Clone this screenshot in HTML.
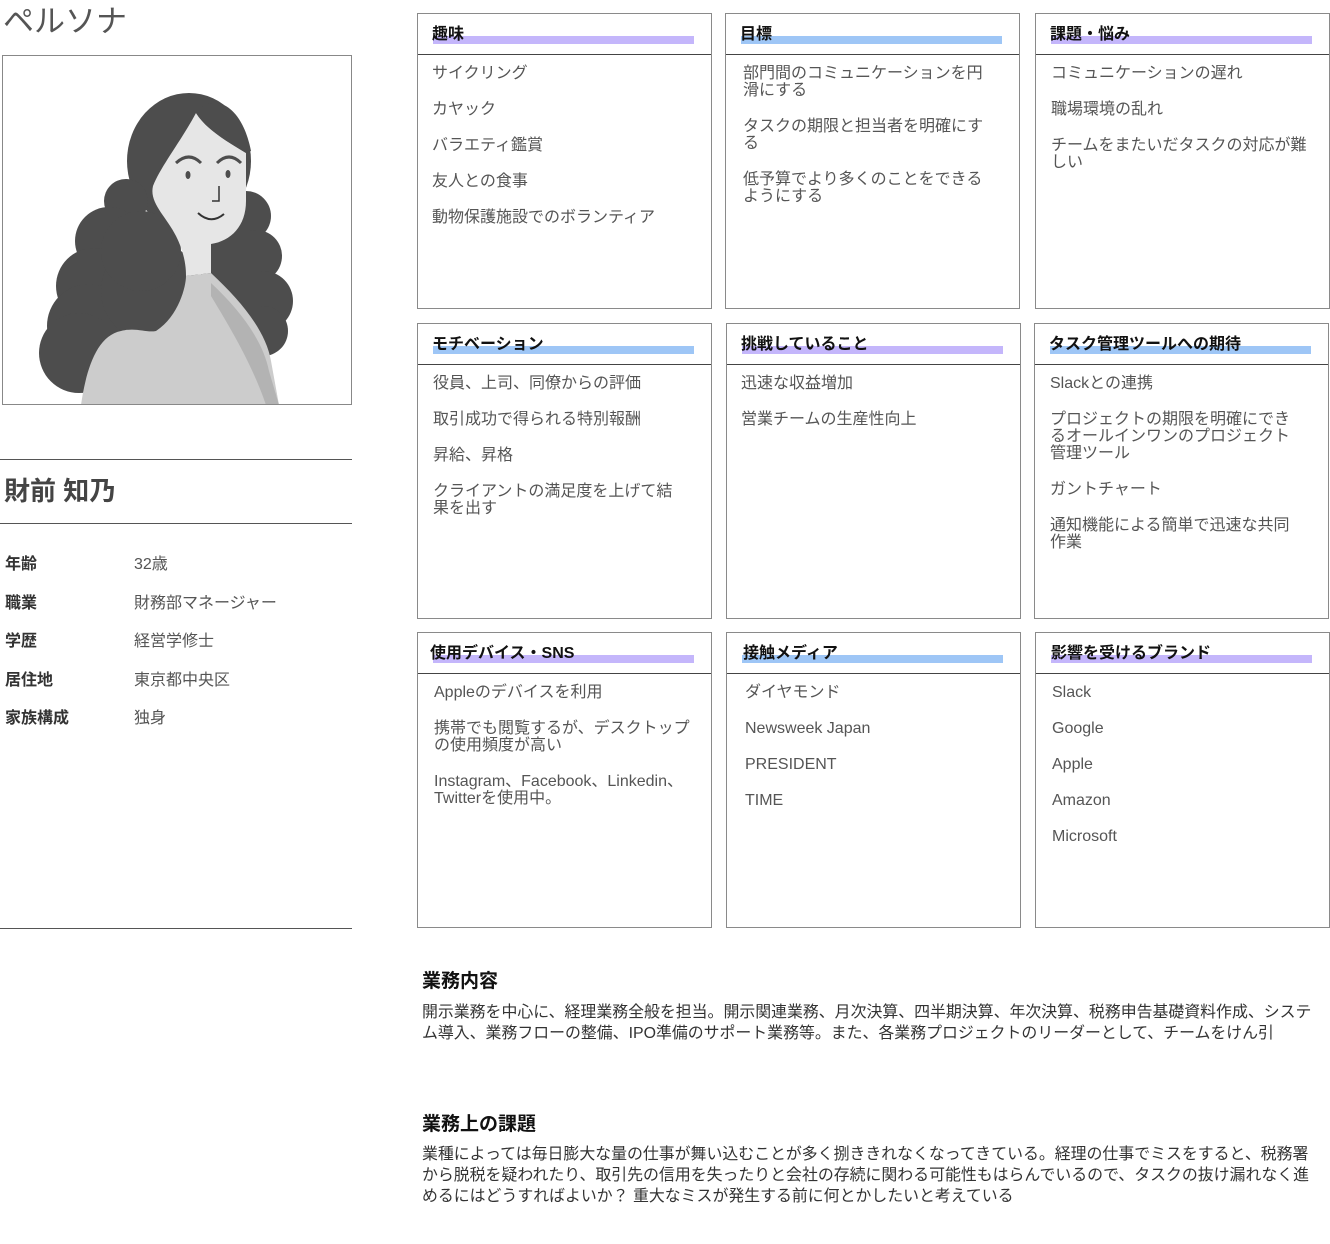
<!DOCTYPE html>
<html><head><meta charset="utf-8"><style>
*{margin:0;padding:0;box-sizing:border-box}
body{width:1330px;height:1244px;background:#fff;font-family:"Liberation Sans","Noto Sans CJK JP",sans-serif;color:#555;position:relative;overflow:hidden}
.a{position:absolute;white-space:nowrap}
.box{position:absolute;border:1px solid #8a8a8a;width:295px;height:296px}
.box .hd{position:absolute;left:0;top:0;right:0;height:41px;border-bottom:1px solid #444}
.box .bar{position:absolute;left:15px;top:22px;width:261px;height:8px}
.box .t{position:absolute;left:14px;top:6px;font-weight:bold;font-size:16px;color:#111}
.box ul{position:absolute;left:14px;top:51px;right:14px;list-style:none;font-size:16px;line-height:17px;color:#555}
.box li{margin-bottom:19px}
.p{background:#c4b6fb}.b{background:#9ec6f6}
.lbl{font-weight:bold;font-size:16px;color:#333;left:5px}
.val{font-size:16px;color:#555;left:134px}
</style></head><body>
<div class="a" style="left:3px;top:-4px;font-size:31px;color:#555">ペルソナ</div>
<div class="a" style="left:2px;top:55px;width:350px;height:350px;border:1px solid #888;overflow:hidden">
<svg width="350" height="350" viewBox="2 55 350 350">
<g fill="#4d4d4d">
<ellipse cx="188" cy="160" rx="62" ry="68"/>
<circle cx="125" cy="200" r="22"/><circle cx="108" cy="240" r="34"/><circle cx="93" cy="285" r="38"/><circle cx="88" cy="325" r="42"/><circle cx="78" cy="352" r="40"/>
<circle cx="150" cy="290" r="50"/><circle cx="140" cy="250" r="40"/>
<circle cx="245" cy="215" r="25"/><circle cx="255" cy="255" r="26"/><circle cx="262" cy="300" r="30"/><circle cx="262" cy="330" r="25"/>
<rect x="200" y="230" width="60" height="110"/>
</g>
<path d="M195,112 C180,140 160,165 152,185 C148,202 165,215 175,235 C185,255 185,270 185,275 L210,272 L210,243 C230,240 245,225 245,200 L245,152 C225,140 205,128 195,112 Z" fill="#e6e6e6"/>
<path d="M195,112 C210,92 240,100 250,150 L245,152 C225,140 205,128 195,112 Z" fill="#4d4d4d"/>
<path d="M80,404 C85,370 95,335 120,330 C135,326 145,332 155,330 C178,315 185,285 185,275 L210,272 C240,300 265,330 270,360 L278,404 Z" fill="#cccccc"/>
<path d="M210,282 C240,310 262,340 268,370 L278,404 L265,404 C250,360 225,320 210,295 Z" fill="#b3b3b3"/>
<ellipse cx="187" cy="174" rx="2.5" ry="4" fill="#4d4d4d"/><ellipse cx="227" cy="173" rx="2.5" ry="4" fill="#4d4d4d"/>
<path d="M175,162 Q188,150 200,162" stroke="#4d4d4d" stroke-width="3" fill="none"/>
<path d="M216,162 Q228,150 240,162" stroke="#4d4d4d" stroke-width="3" fill="none"/>
<path d="M218,185 L218,200 L211,200" stroke="#333" stroke-width="1.5" fill="none"/>
<path d="M197,212 Q210,224 223,213" stroke="#333" stroke-width="2" fill="none"/>
</svg></div>
<div class="a" style="left:0;top:459px;width:352px;border-top:1px solid #555"></div>
<div class="a" style="left:4px;top:471px;font-size:26px;font-weight:bold;color:#444">財前 知乃</div>
<div class="a" style="left:0;top:523px;width:352px;border-top:1px solid #555"></div>
<div class="a lbl" style="top:550px">年齢</div><div class="a val" style="top:550px">32歳</div>
<div class="a lbl" style="top:589px">職業</div><div class="a val" style="top:589px">財務部マネージャー</div>
<div class="a lbl" style="top:627px">学歴</div><div class="a val" style="top:627px">経営学修士</div>
<div class="a lbl" style="top:666px">居住地</div><div class="a val" style="top:666px">東京都中央区</div>
<div class="a lbl" style="top:704px">家族構成</div><div class="a val" style="top:704px">独身</div>
<div class="a" style="left:0;top:928px;width:352px;border-top:1px solid #555"></div>

<div class="box" style="left:417px;top:13px"><div class="hd"><div class="bar p"></div><div class="t">趣味</div></div>
<ul><li>サイクリング</li><li>カヤック</li><li>バラエティ鑑賞</li><li>友人との食事</li><li>動物保護施設でのボランティア</li></ul></div>
<div class="box" style="left:725px;top:13px"><div class="hd"><div class="bar b"></div><div class="t">目標</div></div>
<ul style="left:17px"><li>部門間のコミュニケーションを円<br>滑にする</li><li>タスクの期限と担当者を明確にす<br>る</li><li>低予算でより多くのことをできる<br>ようにする</li></ul></div>
<div class="box" style="left:1035px;top:13px"><div class="hd"><div class="bar p"></div><div class="t">課題・悩み</div></div>
<ul style="left:15px"><li>コミュニケーションの遅れ</li><li>職場環境の乱れ</li><li>チームをまたいだタスクの対応が難<br>しい</li></ul></div>

<div class="box" style="left:417px;top:323px"><div class="hd"><div class="bar b"></div><div class="t">モチベーション</div></div>
<ul style="left:15px"><li>役員、上司、同僚からの評価</li><li>取引成功で得られる特別報酬</li><li>昇給、昇格</li><li>クライアントの満足度を上げて結<br>果を出す</li></ul></div>
<div class="box" style="left:726px;top:323px"><div class="hd"><div class="bar p"></div><div class="t">挑戦していること</div></div>
<ul><li>迅速な収益増加</li><li>営業チームの生産性向上</li></ul></div>
<div class="box" style="left:1034px;top:323px"><div class="hd"><div class="bar b"></div><div class="t">タスク管理ツールへの期待</div></div>
<ul style="left:15px"><li>Slackとの連携</li><li>プロジェクトの期限を明確にでき<br>るオールインワンのプロジェクト<br>管理ツール</li><li>ガントチャート</li><li>通知機能による簡単で迅速な共同<br>作業</li></ul></div>

<div class="box" style="left:417px;top:632px"><div class="hd"><div class="bar p"></div><div class="t" style="left:12px">使用デバイス・SNS</div></div>
<ul style="left:16px"><li>Appleのデバイスを利用</li><li>携帯でも閲覧するが、デスクトップ<br>の使用頻度が高い</li><li>Instagram、Facebook、Linkedin、<br>Twitterを使用中。</li></ul></div>
<div class="box" style="left:726px;top:632px"><div class="hd"><div class="bar b"></div><div class="t" style="left:16px">接触メディア</div></div>
<ul style="left:18px"><li>ダイヤモンド</li><li>Newsweek Japan</li><li>PRESIDENT</li><li>TIME</li></ul></div>
<div class="box" style="left:1035px;top:632px"><div class="hd"><div class="bar p"></div><div class="t" style="left:15px">影響を受けるブランド</div></div>
<ul style="left:16px"><li>Slack</li><li>Google</li><li>Apple</li><li>Amazon</li><li>Microsoft</li></ul></div>

<div class="a" style="left:422px;top:966px;font-size:19px;font-weight:bold;color:#111">業務内容</div>
<div class="a" style="left:422px;top:1002px;font-size:15.9px;line-height:21px;color:#333">開示業務を中心に、経理業務全般を担当。開示関連業務、月次決算、四半期決算、年次決算、税務申告基礎資料作成、システ<br>ム導入、業務フローの整備、IPO準備のサポート業務等。また、各業務プロジェクトのリーダーとして、チームをけん引</div>
<div class="a" style="left:422px;top:1109px;font-size:19px;font-weight:bold;color:#111">業務上の課題</div>
<div class="a" style="left:422px;top:1144px;font-size:15.9px;line-height:21px;color:#333">業種によっては毎日膨大な量の仕事が舞い込むことが多く捌ききれなくなってきている。経理の仕事でミスをすると、税務署<br>から脱税を疑われたり、取引先の信用を失ったりと会社の存続に関わる可能性もはらんでいるので、タスクの抜け漏れなく進<br>めるにはどうすればよいか？ 重大なミスが発生する前に何とかしたいと考えている</div>
</body></html>
